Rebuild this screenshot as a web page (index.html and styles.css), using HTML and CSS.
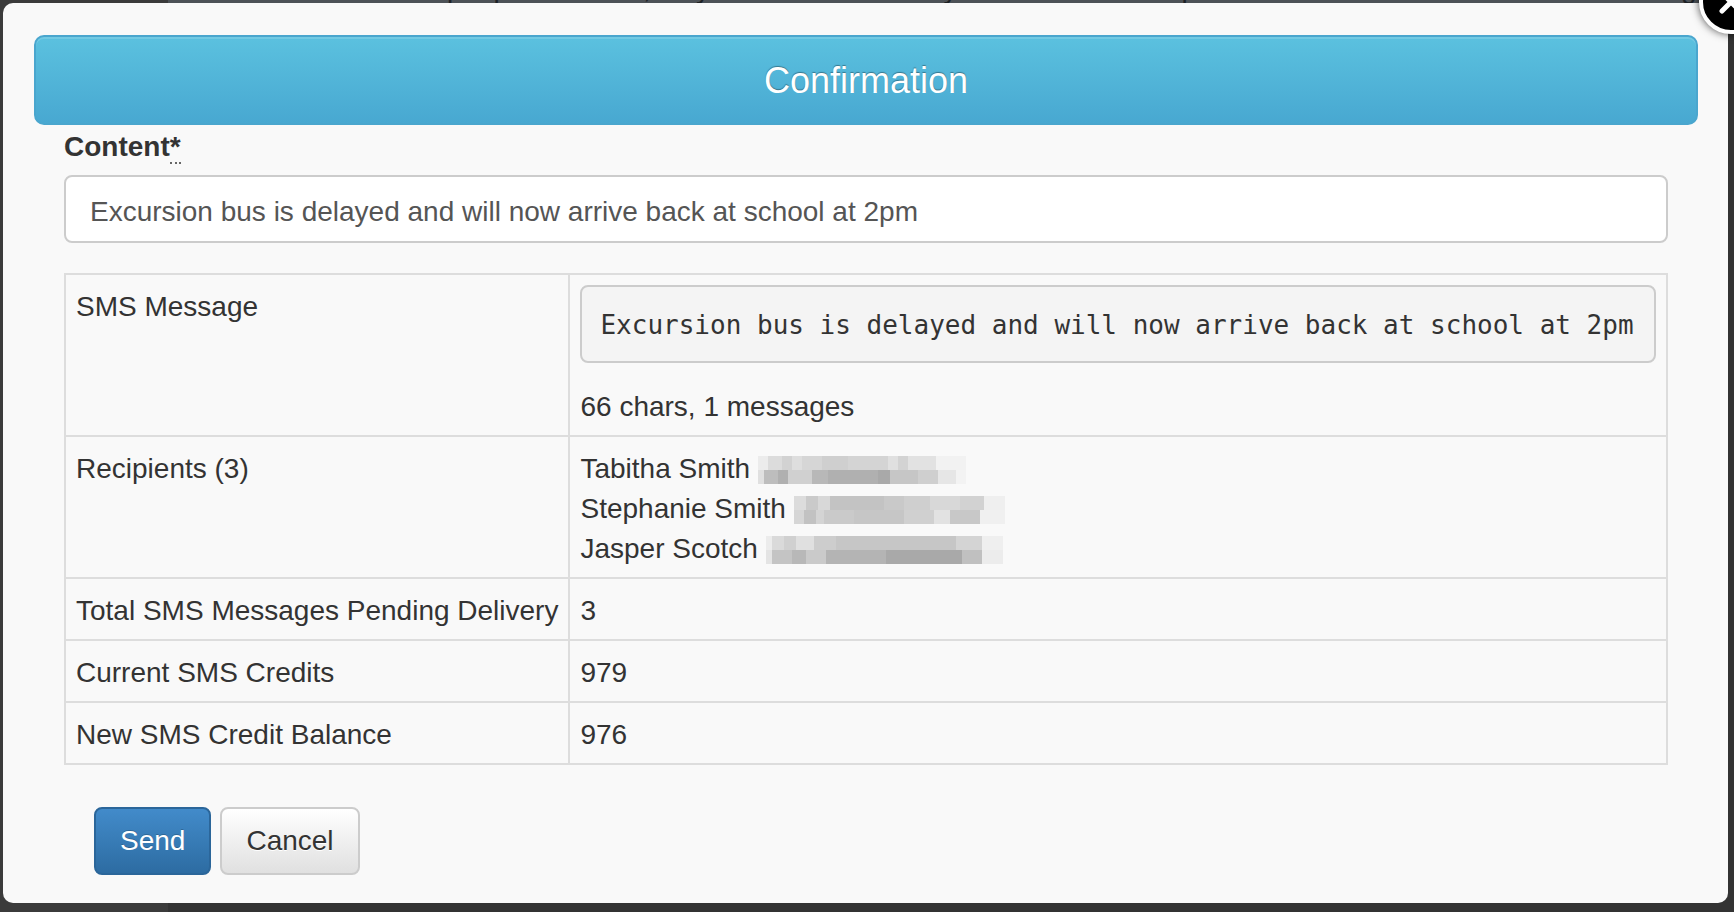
FILE: index.html
```html
<!DOCTYPE html>
<html lang="en">

<head>
    <meta charset="UTF-8">
    <meta name="viewport" content="width=device-width, initial-scale=1.0">
    <title>Confirmation</title>
    <link rel="stylesheet" href="styles.css">
</head>

<body>
    <!-- Dimmed page behind the modal -->
    <div class="backdrop">
        <div class="backdrop-side"></div>
        <div class="backdrop-main">
            <p class="page-note">Please note: of the people selected, only those with correctly formatted mobile phone numbers will be sent SMS messages.</p>
        </div>
    </div>

    <div class="modal">
        <div class="modal-header">Confirmation</div>

        <div class="modal-body">
            <label class="field-label" for="content">Content<abbr title="Required">*</abbr></label>
            <div class="content-input" id="content">Excursion bus is delayed and will now arrive back at school at 2pm</div>

            <table class="summary">
                <tr>
                    <td class="key">SMS Message</td>
                    <td>
                        <pre class="sms-preview">Excursion bus is delayed and will now arrive back at school at 2pm</pre>
                        <div>66 chars, 1 messages</div>
                    </td>
                </tr>
                <tr>
                    <td class="key">Recipients (3)</td>
                    <td>
                        <div>Tabitha Smith <span class="redact redact-a"></span></div>
                        <div>Stephanie Smith <span class="redact redact-b"></span></div>
                        <div>Jasper Scotch <span class="redact redact-c"></span></div>
                    </td>
                </tr>
                <tr>
                    <td class="key">Total SMS Messages Pending Delivery</td>
                    <td>3</td>
                </tr>
                <tr>
                    <td class="key">Current SMS Credits</td>
                    <td>979</td>
                </tr>
                <tr>
                    <td class="key">New SMS Credit Balance</td>
                    <td>976</td>
                </tr>
            </table>
        </div>

        <div class="modal-footer">
            <button class="btn btn-primary">Send</button>
            <button class="btn btn-default">Cancel</button>
        </div>
    </div>

    <button class="modal-close" aria-label="Close">
        <svg width="56" height="56" viewBox="0 0 56 56">
            <path d="M19 19 L37 37 M37 19 L19 37" stroke="#fff" stroke-width="5" stroke-linecap="round" fill="none" />
        </svg>
    </button>
</body>

</html>
```

FILE: styles.css
```css
html,
body {
    margin: 0;
    height: 100%;
}

body {
    font-family: "Liberation Sans", Arial, sans-serif;
    font-size: 28px;
    line-height: 40px;
    color: #333;
    background-color: #333;
    overflow: hidden;
    position: relative;
}

/* Page under the overlay */
.backdrop {
    display: flex;
    height: 100%;
}

.backdrop-side {
    width: 189px;
    background-color: #3b3b3b;
}

.backdrop-main {
    flex: 1;
    background: linear-gradient(#4d5257 0, #4d5257 4px, #333 4px);
}

.page-note {
    margin: -27px 0 0 38px;
    white-space: nowrap;
    font-size: 28px;
    line-height: 32px;
    color: #1d2125;
}

/* Modal */
.modal {
    position: absolute;
    left: 3px;
    top: 3px;
    width: 1725px;
    box-sizing: border-box;
    padding: 32px 30px 28px 31px;
    background-color: #f9f9f9;
    border-radius: 10px;
}

.modal-header {
    height: 90px;
    box-sizing: border-box;
    display: flex;
    align-items: center;
    justify-content: center;
    padding-top: 2px;
    border: 2px solid #4aa6ce;
    border-radius: 10px;
    background: linear-gradient(#5bc1df, #48a8d1);
    box-shadow: inset 0 2px 0 rgba(255, 255, 255, 0.15);
    color: #fff;
    font-size: 36px;
    text-shadow: 0 -1px 1px rgba(0, 0, 0, 0.35);
}

.modal-body {
    padding: 0 30px;
}

.field-label {
    display: block;
    font-weight: bold;
    padding-top: 2px;
    margin-bottom: 8px;
}

.field-label abbr {
    text-decoration: none;
    border-bottom: 2px dotted #666;
}

.content-input {
    height: 68px;
    box-sizing: border-box;
    padding: 15px 24px 9px;
    border: 2px solid #ccc;
    border-radius: 8px;
    background-color: #fff;
    color: #555;
    margin-bottom: 30px;
}

.summary {
    width: 100%;
    border-collapse: collapse;
    border: 2px solid #ddd;
}

.summary td {
    border: 2px solid #ddd;
    padding: 12px 10px 8px;
    vertical-align: top;
}

.summary .key {
    width: 1px;
    white-space: nowrap;
}

.sms-preview {
    margin: -2px 0 24px;
    padding: 18px 18px 16px;
    border: 2px solid #ccc;
    border-radius: 8px;
    background-color: #f4f4f4;
    font-family: "DejaVu Sans Mono", "Liberation Mono", monospace;
    font-size: 26px;
    line-height: 40px;
    color: #333;
    white-space: pre;
}

/* Pixelated phone numbers */
.redact {
    display: inline-block;
    height: 28px;
    vertical-align: -6px;
    background-repeat: no-repeat;
    background-size: 100% 50%;
    background-position: 0 0, 0 100%;
}

.redact-a {
    width: 208px;
    background-image:
        linear-gradient(90deg, #ececec 0 10px, #dcdcdc 10px 24px, #d2d2d2 24px 34px, #dedede 34px 44px, #d6d6d6 44px 64px, #cfcfcf 64px 90px, #d4d4d4 90px 130px, #e0e0e0 130px 140px, #d3d3d3 140px 150px, #e2e2e2 150px 178px, #f2f2f2 178px 208px),
        linear-gradient(90deg, #e0e0e0 0 6px, #bdbdbd 6px 20px, #b0b0b0 20px 30px, #d0d0d0 30px 54px, #b8b8b8 54px 70px, #b0b0b0 70px 120px, #a9a9a9 120px 132px, #c6c6c6 132px 160px, #cfcfcf 160px 180px, #e6e6e6 180px 198px, #f3f3f3 198px 208px);
}

.redact-b {
    width: 211px;
    background-image:
        linear-gradient(90deg, #dcdcdc 0 12px, #cacaca 12px 24px, #d8d8d8 24px 36px, #c3c3c3 36px 90px, #c9c9c9 90px 110px, #cfcfcf 110px 136px, #d8d8d8 136px 166px, #d2d2d2 166px 190px, #efefef 190px 211px),
        linear-gradient(90deg, #d6d6d6 0 10px, #c2c2c2 10px 22px, #d4d4d4 22px 30px, #cacaca 30px 60px, #c6c6c6 60px 110px, #d0d0d0 110px 140px, #e2e2e2 140px 156px, #c8c8c8 156px 186px, #f0f0f0 186px 211px);
}

.redact-c {
    width: 237px;
    background-image:
        linear-gradient(90deg, #ececec 0 6px, #dadada 6px 18px, #d0d0d0 18px 30px, #e0e0e0 30px 48px, #cdcdcd 48px 70px, #c6c6c6 70px 190px, #d4d4d4 190px 216px, #efefef 216px 237px),
        linear-gradient(90deg, #e4e4e4 0 6px, #c4c4c4 6px 26px, #b8b8b8 26px 40px, #cacaca 40px 60px, #b4b4b4 60px 120px, #a9a9a9 120px 196px, #c0c0c0 196px 216px, #ececec 216px 237px);
}

/* Footer buttons */
.modal-footer {
    display: flex;
    gap: 9px;
    padding: 42px 0 0 60px;
}

.btn {
    font-family: "Liberation Sans", Arial, sans-serif;
    font-size: 28px;
    line-height: 40px;
    padding: 12px 24px;
    border-radius: 8px;
    cursor: pointer;
    margin: 0;
}

.btn-primary {
    color: #fff;
    background: linear-gradient(#428bca, #2d6ca2);
    border: 2px solid #2b669a;
    text-shadow: 0 -1px 0 rgba(0, 0, 0, 0.2);
}

.btn-default {
    color: #333;
    background: linear-gradient(#fff, #e0e0e0);
    border: 2px solid #ccc;
    text-shadow: 0 1px 0 #fff;
}

/* Close button sits over the modal corner */
.modal-close {
    position: absolute;
    left: 1703px;
    top: -26px;
    width: 56px;
    height: 56px;
    padding: 0;
    border: 4px solid #fff;
    border-radius: 50%;
    background-color: #000;
    box-shadow: 0 0 8px rgba(0, 0, 0, 0.7);
    box-sizing: content-box;
    margin: -4px;
    display: flex;
    align-items: center;
    justify-content: center;
}

.modal-close svg {
    display: block;
}
```
